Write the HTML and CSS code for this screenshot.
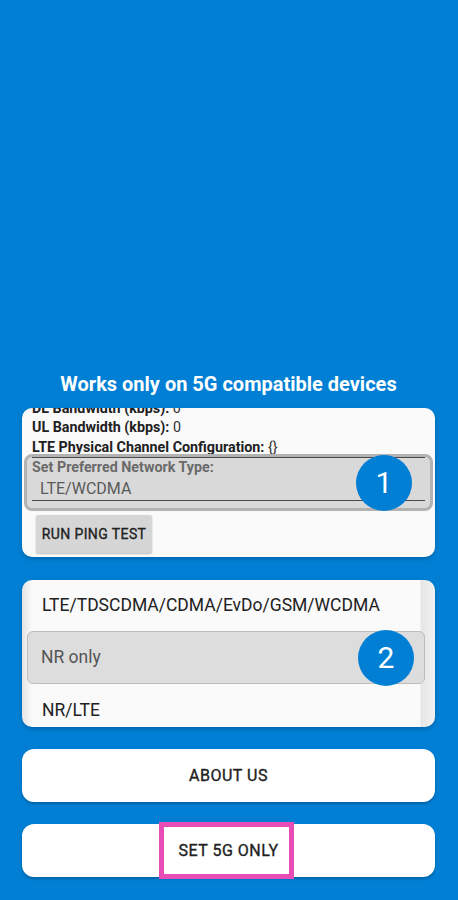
FILE: index.html
```html
<!DOCTYPE html>
<html lang="en">
<head>
  <meta charset="UTF-8"/>
  <meta name="viewport" content="width=device-width,initial-scale=1.0"/>
  <title>5G Switch</title>
  <link rel="stylesheet" href="styles.css">
</head>
<body>
  <main class="screen">
    <h1 class="headline">Works only on 5G compatible devices</h1>

    <!-- radio info card, scrolled to the bottom -->
    <section class="card info-card">
      <div class="info-lines">
        <p><b>DL Bandwidth (kbps):</b> 0</p>
        <p><b>UL Bandwidth (kbps):</b> 0</p>
        <p><b>LTE Physical Channel Configuration:</b> {}</p>
      </div>
      <div class="spinner">
        <div class="spinner-inner">
          <div class="spinner-label">Set Preferred Network Type:</div>
          <div class="spinner-value">LTE/WCDMA</div>
        </div>
        <span class="step">1</span>
      </div>
      <button class="ping-btn" type="button">RUN PING TEST</button>
    </section>

    <!-- network type dropdown -->
    <section class="card list-card">
      <div class="list-item">LTE/TDSCDMA/CDMA/EvDo/GSM/WCDMA</div>
      <div class="list-item selected">NR only <span class="step">2</span></div>
      <div class="list-item">NR/LTE</div>
    </section>

    <button class="wide-btn" type="button">ABOUT US</button>
    <button class="wide-btn highlight" type="button">SET 5G ONLY<span class="marker"></span></button>
  </main>
</body>
</html>
```

FILE: styles.css
```css
:root {
  --blue:      #007fd4;
  --card:      #fafafa;
  --text:      #212121;
  --grey-box:  #d9d9d9;
  --pink:      #e84cb6;
}
* { margin:0; padding:0; box-sizing:border-box; }
html, body {
  height:100%;
  background:var(--blue);
  font-family:Roboto,'Noto Sans',sans-serif;
  color:var(--text);
}
.screen {
  display:flex; flex-direction:column;
  padding:372px 23px 0 22px;
}
.headline {
  color:#fff; font-size:20px; font-weight:700;
  line-height:24px; text-align:center;
  margin-bottom:12px;
}

/* ─── CARDS ───────────────────────── */
.card {
  background:var(--card);
  border-radius:10px;
  overflow:hidden;
  box-shadow:0 2px 4px rgba(0,0,0,0.2);
}
.info-card {
  height:149px;
  display:flex; flex-direction:column;
  justify-content:flex-end;
}
.info-card > * { flex-shrink:0; }
.info-lines { padding:0 10px; }
.info-lines p {
  font-size:14.3px; line-height:19.5px;
  color:#333;
}
.info-lines b { color:var(--text); font-weight:700; }

.spinner {
  position:relative;
  margin:-3px 2px 0;
  height:57px;
  border:3px solid #b3b3b3; border-radius:8px;
  background:var(--grey-box);
  padding:0 5px 6px;
}
.spinner-inner {
  border-top:1.5px solid #4a4a4a;
  border-bottom:1.5px solid #4a4a4a;
}
.spinner-label {
  font-size:14.3px; font-weight:700; line-height:19px;
  color:#6a6a6a;
}
.spinner-value {
  font-size:16px; line-height:23px;
  color:#5a5a5a; padding-left:8px;
}
.step {
  position:absolute; top:50%; right:18px;
  transform:translateY(-50%);
  width:56px; height:56px; border-radius:50%;
  background:var(--blue); color:#fff;
  font-size:30px; font-weight:400;
  line-height:56px; text-align:center;
}
.ping-btn {
  align-self:flex-start;
  margin:4px 0 4px 14px;
  width:116px; height:38px;
  background:#d6d6d6; border:none; border-radius:2px;
  box-shadow:0 1px 2px rgba(0,0,0,0.25);
  font-family:inherit; font-size:14px; font-weight:400;
  letter-spacing:0.4px;
  -webkit-text-stroke:0.35px currentColor;
  color:var(--text);
}

/* ─── LIST ────────────────────────── */
.list-card {
  margin-top:23px; height:147px;
  background:linear-gradient(to right,
    #e4e4e4 0, var(--card) 10px,
    var(--card) calc(100% - 15px), #e6e6e6 calc(100% - 14px), #f1f1f1 100%);
}
.list-item {
  position:relative;
  height:52px; line-height:52px;
  padding-left:20px;
  font-size:17.5px; color:var(--text);
}
.list-item:first-child { height:51px; line-height:51px; }
.list-item.selected {
  height:53px; line-height:50px;
  margin:0 10px 0 5px; padding-left:13px;
  background:#dddddd;
  border:1.5px solid #bcbcbc; border-radius:6px;
  color:#555;
}
.list-item.selected .step { right:10px; }

/* ─── BUTTONS ─────────────────────── */
.wide-btn {
  position:relative;
  margin-top:22px; height:53px;
  background:#fff; border:none; border-radius:12px;
  box-shadow:0 2px 3px rgba(0,0,0,0.22);
  font-family:inherit; font-size:16px; font-weight:400;
  letter-spacing:0.5px;
  -webkit-text-stroke:0.35px currentColor;
  color:var(--text);
}
.marker {
  position:absolute; top:-2px; bottom:-2px;
  left:calc(50% - 69.5px); width:135px;
  border:5px solid var(--pink);
}
```
